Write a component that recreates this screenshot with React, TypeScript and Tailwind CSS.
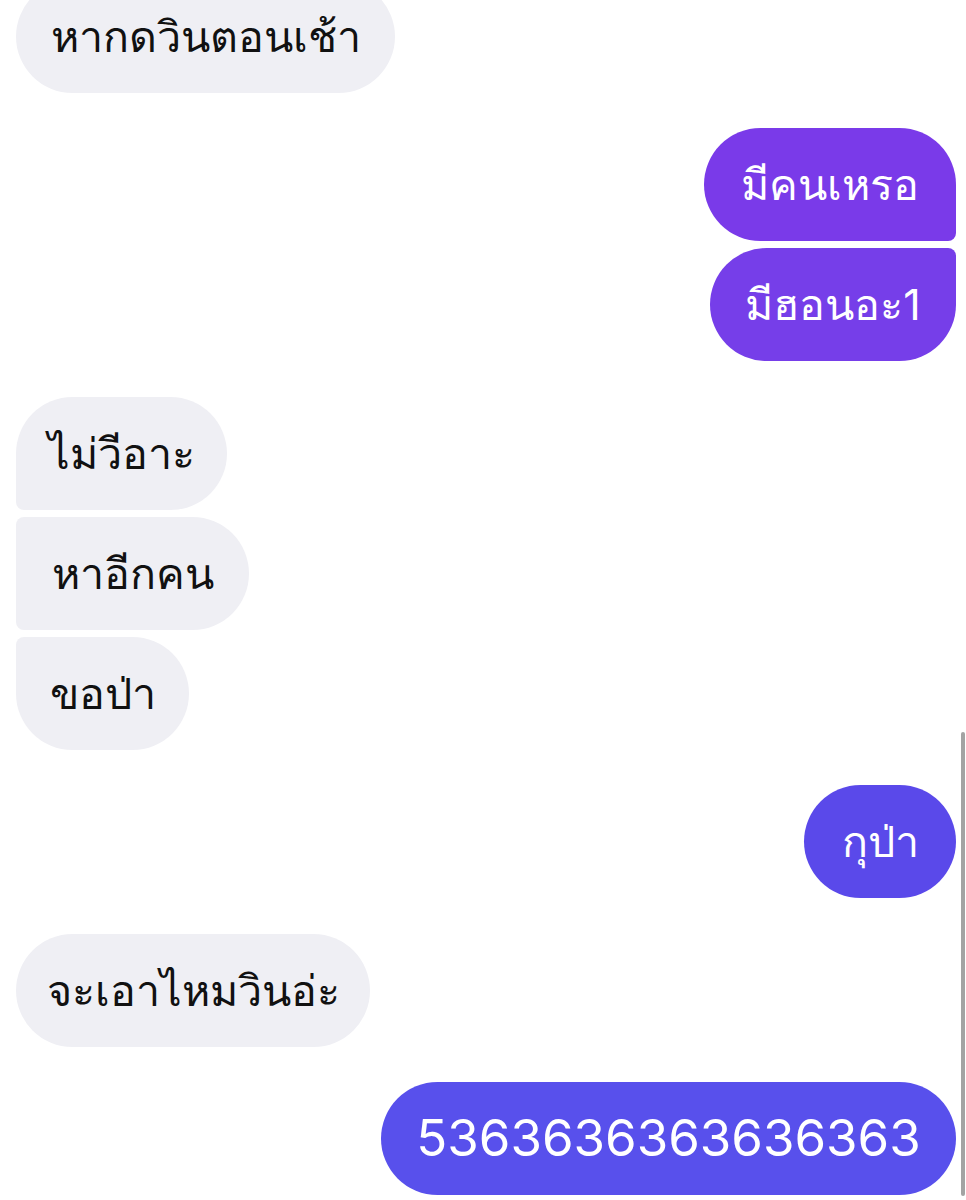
type Side = 'in' | 'out';

interface Msg {
  text: string;
  side: Side;
  width: number;
  round: string;
  bg: string;
  gap: string;
  size?: string;
}

const MESSAGES: Msg[] = [
  { text: 'หากดวินตอนเช้า', side: 'in', width: 379, round: 'rounded-[57px]', bg: 'bg-[#efeff4]', gap: 'mt-[-20px]' },
  { text: 'มีคนเหรอ', side: 'out', width: 252, round: 'rounded-[57px] rounded-br-[8px]', bg: 'bg-[#7a3ae9]', gap: 'mt-[35px]' },
  { text: 'มีฮอนอะ1', side: 'out', width: 246, round: 'rounded-[57px] rounded-tr-[8px]', bg: 'bg-[#763ee9]', gap: 'mt-[7px]' },
  { text: 'ไม่วีอาะ', side: 'in', width: 211, round: 'rounded-[57px] rounded-bl-[8px]', bg: 'bg-[#efeff4]', gap: 'mt-[36px]' },
  { text: 'หาอีกคน', side: 'in', width: 233, round: 'rounded-[57px] rounded-tl-[8px] rounded-bl-[8px]', bg: 'bg-[#efeff4]', gap: 'mt-[7px]' },
  { text: 'ขอป่า', side: 'in', width: 173, round: 'rounded-[57px] rounded-tl-[8px]', bg: 'bg-[#efeff4]', gap: 'mt-[7px]' },
  { text: 'กุป่า', side: 'out', width: 152, round: 'rounded-[57px]', bg: 'bg-[#5a49ea]', gap: 'mt-[35px]' },
  { text: 'จะเอาไหมวินอ่ะ', side: 'in', width: 354, round: 'rounded-[57px]', bg: 'bg-[#efeff4]', gap: 'mt-[36px]' },
  { text: '5363636363636363', side: 'out', width: 575, round: 'rounded-[57px]', bg: 'bg-[#5850ec]', gap: 'mt-[35px]', size: 'text-[51px]' },
];

function Bubble({ msg }: { msg: Msg }) {
  const isOut = msg.side === 'out';
  return (
    <div className={`flex ${isOut ? 'justify-end' : 'justify-start'} ${msg.gap}`}>
      <div
        style={{ width: msg.width }}
        className={`h-[113px] flex items-center justify-center whitespace-nowrap ${msg.size ?? 'text-[43px]'} ${msg.round} ${msg.bg} ${
          isOut ? 'text-white' : 'text-[#111111]'
        }`}
      >
        {msg.text}
      </div>
    </div>
  );
}

export default function App() {
  return (
    <div className="relative w-[966px] h-[1200px] overflow-hidden bg-white font-['Inter','Noto_Sans',sans-serif]">
      <div className="flex flex-col pl-4 pr-[10px]">
        {MESSAGES.map((m, i) => (
          <Bubble key={i} msg={m} />
        ))}
      </div>
      {/* scrollbar */}
      <div className="absolute right-[1px] top-[732px] w-[4px] h-[464px] rounded-full bg-[#a3a3a3]" />
    </div>
  );
}
